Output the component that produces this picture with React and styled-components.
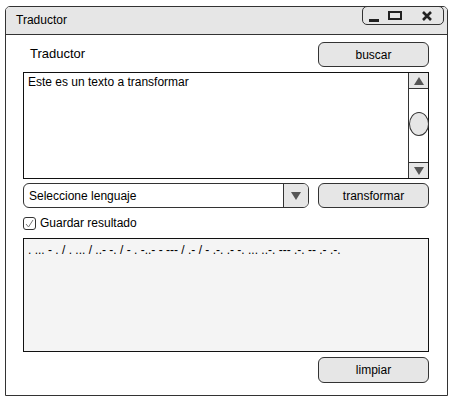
import React from 'react';
import styled, { createGlobalStyle } from 'styled-components';

const GlobalStyle = createGlobalStyle`
  body {
    margin: 0;
    background: #ffffff;
    font-family: "Liberation Sans", Arial, sans-serif;
    color: #000;
  }
`;

const Window = styled.div`
  margin: 6px 0 0 5px;
  width: 443px;
  height: 390px;
  box-sizing: border-box;
  border: 1.5px solid #333;
  border-radius: 5px 5px 0 0;
  display: flex;
  flex-direction: column;
  background: #fff;
`;

const TitleBar = styled.div`
  height: 27px;
  flex-shrink: 0;
  display: flex;
  align-items: flex-start;
  background: #e6e6e6;
  border-bottom: 1.5px solid #333;
  border-radius: 4px 4px 0 0;
`;

const TitleText = styled.span`
  font-size: 12px;
  margin: 6px 0 0 10px;
`;

const Controls = styled.div`
  margin: -1px 3px 0 auto;
  width: 82px;
  height: 19px;
  box-sizing: border-box;
  border: 1px solid #333;
  border-radius: 5px;
  display: flex;
  align-items: center;
  padding-left: 6px;
  gap: 9px;
`;

const Content = styled.div`
  flex: 1;
  display: flex;
  flex-direction: column;
  padding: 7px 18px 0 17px;
`;

const Row = styled.div`
  display: flex;
  align-items: center;
  justify-content: space-between;
  gap: 9px;
  margin-top: ${(p) => p.$mt || 0}px;
`;

const Label = styled.span`
  font-size: 13px;
  margin-left: 7px;
  margin-top: -3px;
`;

const Button = styled.button`
  width: 111px;
  height: ${(p) => p.$h || 25}px;
  flex-shrink: 0;
  box-sizing: border-box;
  background: #e6e6e6;
  border: 1px solid #333;
  border-radius: 6px;
  font-family: "Liberation Sans", Arial, sans-serif;
  font-size: 12px;
  color: #000;
  padding: 0;
  margin-left: auto;
`;

const TextBox = styled.div`
  margin-top: 5px;
  height: 107px;
  box-sizing: border-box;
  border: 1.5px solid #111;
  display: flex;
  background: ${(p) => p.$bg || '#fff'};
`;

const TextBody = styled.div`
  flex: 1;
  font-size: 12px;
  padding: ${(p) => p.$pt ?? 2}px 4px;
  line-height: 14px;
  white-space: nowrap;
`;

const ScrollBar = styled.div`
  width: 19px;
  border-left: 1px solid #333;
  display: flex;
  flex-direction: column;
`;

const ArrowBox = styled.div`
  height: 15px;
  background: #e6e6e6;
  display: flex;
  align-items: center;
  justify-content: center;
  border-${(p) => (p.$up ? 'bottom' : 'top')}: 1px solid #333;
`;

const Track = styled.div`
  flex: 1;
  display: flex;
  align-items: center;
  justify-content: center;
  padding-bottom: 4px;
`;

const Thumb = styled.div`
  width: 20px;
  height: 24px;
  margin-right: -1px;
  box-sizing: border-box;
  border: 1px solid #333;
  border-radius: 50%;
  background: #e6e6e6;
`;

const Select = styled.div`
  width: 287px;
  height: 25px;
  box-sizing: border-box;
  border: 1px solid #333;
  border-radius: 6px;
  display: flex;
  overflow: hidden;
`;

const SelectText = styled.span`
  flex: 1;
  font-size: 12px;
  padding-left: 5px;
  display: flex;
  align-items: center;
`;

const SelectArrow = styled.div`
  width: 24px;
  background: #e6e6e6;
  border-left: 1px solid #333;
  display: flex;
  align-items: center;
  justify-content: center;
`;

const CheckRow = styled.label`
  display: flex;
  align-items: center;
  gap: 4px;
  margin-top: 8px;
  font-size: 12px;
`;

const CheckBox = styled.span`
  width: 13px;
  height: 13px;
  box-sizing: border-box;
  border: 1px solid #333;
  border-radius: 3px;
  display: flex;
  align-items: center;
  justify-content: center;
`;

const Output = styled(TextBox)`
  margin-top: 8px;
  height: 114px;
`;

const Triangle = ({ down }) => (
  <svg width="10" height="8" viewBox="0 0 10 8">
    <path d={down ? 'M0 0 L10 0 L5 8 Z' : 'M0 8 L10 8 L5 0 Z'} fill="#555" />
  </svg>
);

const morse =
  '. ... - . / . ... / ..- -. / - . -..- - --- / .- / - .-. .- -. ... ..-. --- .-. -- .- .-.';

export default function App() {
  return (
    <>
      <GlobalStyle />
      <Window>
        <TitleBar>
          <TitleText>Traductor</TitleText>
          <Controls>
            <svg width="10" height="14" viewBox="0 0 10 14">
              <rect x="0" y="10" width="10" height="3" fill="#222" />
            </svg>
            <svg width="14" height="10" viewBox="0 0 14 10">
              <rect x="1" y="1" width="12" height="7" fill="none" stroke="#222" strokeWidth="2" />
            </svg>
            <svg width="12" height="10" viewBox="0 0 12 10" style={{ marginLeft: 10 }}>
              <path d="M2 1 L10 9 M10 1 L2 9" stroke="#222" strokeWidth="2.6" />
            </svg>
          </Controls>
        </TitleBar>
        <Content>
          <Row>
            <Label>Traductor</Label>
            <Button>buscar</Button>
          </Row>
          <TextBox>
            <TextBody>Este es un texto a transformar</TextBody>
            <ScrollBar>
              <ArrowBox $up>
                <Triangle />
              </ArrowBox>
              <Track>
                <Thumb />
              </Track>
              <ArrowBox>
                <Triangle down />
              </ArrowBox>
            </ScrollBar>
          </TextBox>
          <Row $mt={4}>
            <Select>
              <SelectText>Seleccione lenguaje</SelectText>
              <SelectArrow>
                <Triangle down />
              </SelectArrow>
            </Select>
            <Button>transformar</Button>
          </Row>
          <CheckRow>
            <CheckBox>
              <svg width="9" height="9" viewBox="0 0 9 9">
                <path d="M1 5 L3.5 8 L8 1" fill="none" stroke="#777" strokeWidth="1" />
              </svg>
            </CheckBox>
            Guardar resultado
          </CheckRow>
          <Output $bg="#f4f4f4">
            <TextBody $pt={4}>{morse}</TextBody>
          </Output>
          <Row $mt={5}>
            <Button $h={26}>limpiar</Button>
          </Row>
        </Content>
      </Window>
    </>
  );
}
